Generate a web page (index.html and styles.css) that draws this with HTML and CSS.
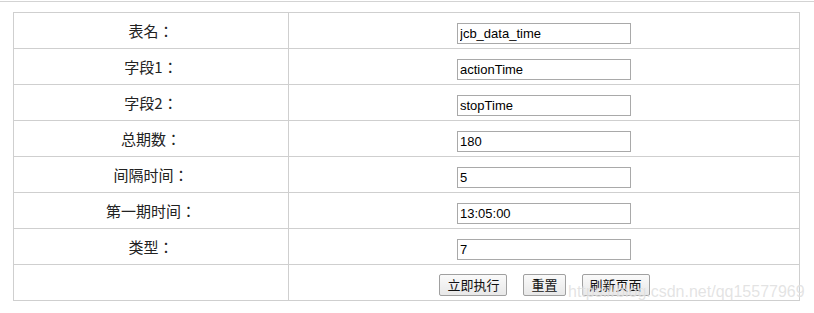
FILE: index.html
```html
<!DOCTYPE html>
<html lang="zh">
<head>
<meta charset="utf-8">
<link rel="stylesheet" href="styles.css">
</head>
<body>
<div class="rule"></div>
<div class="wrap">
<table class="form">
  <tr><td class="label" lang="ja">表名：</td><td class="field"><input class="text" value="jcb_data_time"></td></tr>
  <tr><td class="label" lang="ja">字段1：</td><td class="field"><input class="text" value="actionTime"></td></tr>
  <tr><td class="label" lang="ja">字段2：</td><td class="field"><input class="text" value="stopTime"></td></tr>
  <tr><td class="label" lang="ja">总期数：</td><td class="field"><input class="text" value="180"></td></tr>
  <tr><td class="label" lang="ja">间隔时间：</td><td class="field"><input class="text" value="5"></td></tr>
  <tr><td class="label" lang="ja">第一期时间：</td><td class="field"><input class="text" value="13:05:00"></td></tr>
  <tr><td class="label" lang="ja">类型：</td><td class="field"><input class="text" value="7"></td></tr>
  <tr><td class="label"></td><td class="field"><div class="actions"><button class="btn">立即执行</button><button class="btn">重置</button><button class="btn">刷新页面</button></div></td></tr>
</table>
<div class="watermark">https://blog.csdn.net/qq15577969</div>
</div>
</body>
</html>
```
FILE: styles.css
```css
html, body {
  margin: 0;
  padding: 0;
  background: #fff;
}
body {
  font-family: "Noto Sans CJK SC", "Liberation Sans", sans-serif;
  color: #222;
}
.rule {
  margin-top: 1px;
  height: 1px;
  background: #d3d3d3;
}
.wrap {
  position: relative;
  padding: 10px 0 0 13px;
}
.form {
  border-collapse: collapse;
  width: 787px;
  table-layout: fixed;
}
.form td {
  border: 1px solid #cfcfcf;
  height: 35px;
  padding: 0;
  box-sizing: border-box;
}
.form tr {
  height: 36px;
}
.label {
  width: 275px;
  text-align: center;
  font-family: "Noto Sans CJK JP", "Noto Sans CJK SC", sans-serif;
  font-size: 15px;
  line-height: 20px;
}
.field {
  text-align: center;
  padding-left: 1px;
}
.text {
  box-sizing: border-box;
  width: 174px;
  height: 21px;
  margin-top: 2px;
  border: 1px solid #a9a9a9;
  padding: 0 2px;
  font-family: "Liberation Sans", Arial, sans-serif;
  font-size: 13px;
  color: #000;
  vertical-align: middle;
}
.actions {
  display: flex;
  justify-content: center;
  align-items: center;
  gap: 16px;
  padding-top: 4px;
  padding-left: 1px;
}
.btn {
  box-sizing: border-box;
  height: 22px;
  padding: 0 7px;
  border: 1px solid #a0a0a0;
  border-radius: 2px;
  background: linear-gradient(#fafafa, #e8e8e8);
  font-family: "Noto Sans CJK SC", sans-serif;
  font-size: 13px;
  line-height: 20px;
  color: #111;
}
.watermark {
  position: absolute;
  left: 568px;
  top: 281px;
  font-family: "Liberation Sans", Arial, sans-serif;
  font-size: 16px;
  color: rgba(200, 200, 200, 0.5);
  text-shadow: 0 0 1px rgba(255,255,255,0.8);
  pointer-events: none;
}
```
